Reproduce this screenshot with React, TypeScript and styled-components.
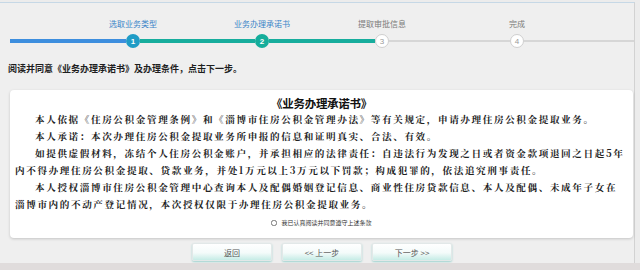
import React from 'react'
import styled, { createGlobalStyle } from 'styled-components'

const GlobalStyle = createGlobalStyle`
  body {
    margin: 0;
    background: #ececec;
    font-family: "Noto Sans CJK SC", "Liberation Sans", sans-serif;
  }
`

type StepState = 'done' | 'active' | 'todo'

const steps: { label: string; state: StepState }[] = [
  { label: '选取业务类型', state: 'done' },
  { label: '业务办理承诺书', state: 'active' },
  { label: '提取审批信息', state: 'todo' },
  { label: '完成', state: 'todo' }
]

// widths of bar segments before each step, the last one fills the rest
const segments: { width: number; tone: 'blue' | 'teal' | 'gray' }[] = [
  { width: 116, tone: 'blue' },
  { width: 115, tone: 'teal' },
  { width: 106, tone: 'teal' },
  { width: 121, tone: 'gray' }
]

const App: React.FC = () => {
  return (
    <Page>
      <GlobalStyle />
      <Main>
        <Stepper>
          {steps.map((s, i) => (
            <React.Fragment key={s.label}>
              <Bar $tone={segments[i].tone} style={{ width: segments[i].width }} />
              <Step>
                <StepLabel $on={s.state !== 'todo'}>{s.label}</StepLabel>
                <Dot $state={s.state}>{i + 1}</Dot>
              </Step>
            </React.Fragment>
          ))}
          <Bar $tone="gray" $fill />
        </Stepper>
        <Hint>阅读并同意《业务办理承诺书》及办理条件，点击下一步。</Hint>
        <Panel>
          <Title>《业务办理承诺书》</Title>
          <Para $indent>本人依据《住房公积金管理条例》和《淄博市住房公积金管理办法》等有关规定，申请办理住房公积金提取业务。</Para>
          <Para $indent>本人承诺：本次办理住房公积金提取业务所申报的信息和证明真实、合法、有效。</Para>
          <Para $indent>如提供虚假材料，冻结个人住房公积金账户，并承担相应的法律责任：自违法行为发现之日或者资金款项退回之日起5年</Para>
          <Para>内不得办理住房公积金提取、贷款业务，并处1万元以上3万元以下罚款；构成犯罪的，依法追究刑事责任。</Para>
          <Para $indent>本人授权淄博市住房公积金管理中心查询本人及配偶婚姻登记信息、商业性住房贷款信息、本人及配偶、未成年子女在</Para>
          <Para>淄博市内的不动产登记情况，本次授权仅限于办理住房公积金提取业务。</Para>
          <Agree>
            <Check type="checkbox" />
            <span>我已认真阅读并同意遵守上述条款</span>
          </Agree>
        </Panel>
        <Actions>
          <Button>返回</Button>
          <Button>&lt;&lt; 上一步</Button>
          <Button>下一步 &gt;&gt;</Button>
        </Actions>
      </Main>
      <Footer />
    </Page>
  )
}

export default App

const Page = styled.div`
  width: 640px;
  height: 270px;
  overflow: hidden;
  display: flex;
  flex-direction: column;
`

const Main = styled.div`
  width: 634px;
  margin-top: 2px;
  border-top: 1px solid #c6d8e6;
  border-right: 1px solid #d2d2d2;
  background: #efefef;
  flex: 1;
`

const Stepper = styled.div`
  display: flex;
  align-items: flex-end;
  padding: 14px 0 0 10px;
  height: 31px;
`

const Bar = styled.div<{ $tone: 'blue' | 'teal' | 'gray'; $fill?: boolean }>`
  flex: ${p => (p.$fill ? 1 : 'none')};
  height: ${p => (p.$tone === 'gray' ? '2px' : '4px')};
  margin-bottom: ${p => (p.$tone === 'gray' ? '6px' : '5px')};
  background: ${p =>
    p.$tone === 'blue' ? '#3d8ede' : p.$tone === 'teal' ? '#17ad9d' : '#d6d6d6'};
`

const Step = styled.div`
  width: 14px;
  display: flex;
  flex-direction: column;
  align-items: center;
`

const StepLabel = styled.span<{ $on: boolean }>`
  white-space: nowrap;
  font-size: 8px;
  line-height: 10px;
  margin-bottom: 5px;
  color: ${p => (p.$on ? '#3a84c8' : '#7a7a7a')};
`

const Dot = styled.div<{ $state: StepState }>`
  width: 14px;
  height: 14px;
  box-sizing: border-box;
  border-radius: 50%;
  display: flex;
  align-items: center;
  justify-content: center;
  font-family: "Liberation Sans", sans-serif;
  font-size: 8px;
  font-weight: ${p => (p.$state === 'todo' ? 400 : 700)};
  color: ${p => (p.$state === 'todo' ? '#9a9a9a' : '#ffffff')};
  background: ${p =>
    p.$state === 'done' ? '#1f9cc6' : p.$state === 'active' ? '#14ad9b' : '#ffffff'};
  border: ${p => (p.$state === 'todo' ? '1px solid #cfcfcf' : 'none')};
`

const Hint = styled.div`
  margin: 15px 0 0 8px;
  font-size: 9px;
  line-height: 12px;
  font-weight: 700;
  color: #1e1e1e;
`

const Panel = styled.div`
  margin: 15px 1px 0 10px;
  padding: 5px 5px 4px 5px;
  background: #ffffff;
  border-radius: 4px;
  box-shadow: 0 1px 3px rgba(0, 0, 0, 0.18);
  height: 139px;
  box-sizing: content-box;
`

const Title = styled.div`
  text-align: center;
  font-size: 11.5px;
  line-height: 16px;
  font-weight: 700;
  color: #111;
  letter-spacing: -0.3px;
`

const Para = styled.div<{ $indent?: boolean }>`
  font-family: "Noto Serif CJK SC", "Noto Sans CJK SC", serif;
  font-size: 9.6px;
  line-height: 17px;
  letter-spacing: 1.6px;
  font-weight: 700;
  white-space: nowrap;
  color: #222;
  padding-left: ${p => (p.$indent ? '20px' : '0')};
`

const Agree = styled.label`
  display: flex;
  align-items: center;
  justify-content: center;
  gap: 4px;
  margin-top: 5px;
  font-size: 6px;
  line-height: 10px;
  color: #333;
`

const Check = styled.input`
  width: 6px;
  height: 6px;
  margin: 0;
`

const Actions = styled.div`
  display: flex;
  justify-content: center;
  gap: 10px;
  margin-top: 5px;
  padding-left: 10px;
`

const Button = styled.button`
  width: 80px;
  height: 18px;
  padding: 0;
  border: 1px solid #e2e8e8;
  border-radius: 2px;
  background: linear-gradient(#ffffff 0%, #f4fbfa 55%, #c6ece6 100%);
  box-shadow: 0 1px 2px rgba(40, 170, 160, 0.4);
  font-family: "Noto Sans CJK SC", sans-serif;
  font-size: 8px;
  color: #555;
  cursor: pointer;
`

const Footer = styled.div`
  height: 7px;
  background: #e0dcdc;
`
